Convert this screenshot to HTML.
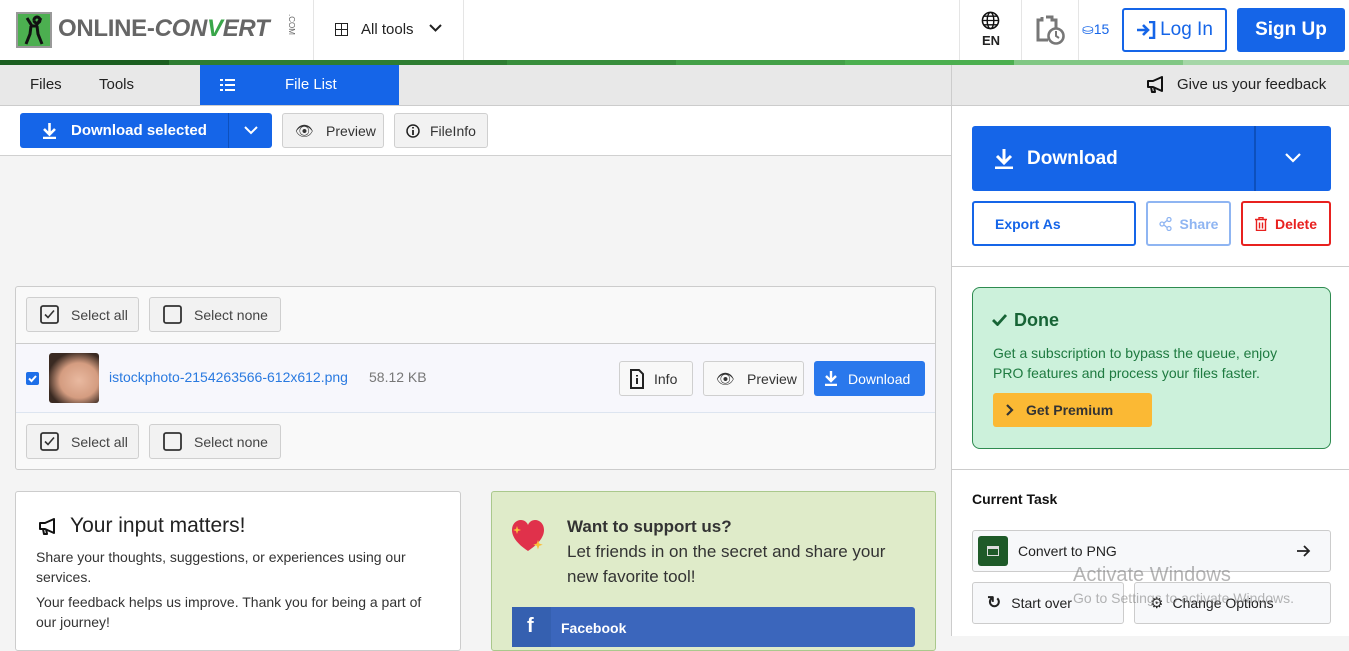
<!DOCTYPE html>
<html><head><meta charset="utf-8"><style>
*{box-sizing:border-box;margin:0;padding:0}
body{width:1349px;height:636px;overflow:hidden;font-family:"Liberation Sans",sans-serif;background:#f4f4f4;position:relative;color:#222}
.a{position:absolute}
.btn{position:absolute;display:flex;align-items:center;border-radius:3px;font-size:14px}
.gb{background:#f2f2f2;border:1px solid #cfcfcf;color:#333}
svg{display:block}
</style></head><body>
<div class="a" style="left:0;top:0;width:1349px;height:60px;background:#fff"></div>
<div class="a" style="left:16px;top:12px;width:36px;height:36px;background:#4caf50;border:2px solid #999"><svg width="32" height="32" viewBox="0 0 32 32"><path d="M16 6a3 3 0 1 1 0 .1M9 4l5 8h4l5-8M13 12l-1 8-4 10M19 12l1 8 4 10" stroke="#111" stroke-width="3" fill="none"/></svg></div>
<div class="a" style="left:58px;top:15px;font-size:24px;font-weight:bold;color:#666;letter-spacing:-0.3px">ONLINE-<span style="font-style:italic">CON</span><span style="font-style:italic;color:#3aa64a">V</span><span style="font-style:italic">ERT</span></div>
<div class="a" style="left:281px;top:20px;font-size:8px;color:#666;transform:rotate(90deg)">.COM</div>
<div class="a" style="left:313px;top:0;width:1px;height:60px;background:#e5e5e5"></div>
<div class="a" style="left:463px;top:0;width:1px;height:60px;background:#e5e5e5"></div>
<div class="a" style="left:335px;top:23px"><svg width="13" height="13"><rect x="0.5" y="0.5" width="12" height="12" fill="none" stroke="#222"/><path d="M6.5 0v13M0 6.5h13" stroke="#222"/></svg></div>
<div class="a" style="left:361px;top:21px;font-size:15px">All tools</div>
<div class="a" style="left:429px;top:24px"><svg width="13" height="9"><path d="M1 1l5.5 5.5L12 1" stroke="#222" stroke-width="2" fill="none"/></svg></div>
<div class="a" style="left:959px;top:0;width:1px;height:60px;background:#e5e5e5"></div>
<div class="a" style="left:1021px;top:0;width:1px;height:60px;background:#e5e5e5"></div>
<div class="a" style="left:1078px;top:0;width:1px;height:60px;background:#e5e5e5"></div>
<div class="a" style="left:981px;top:11px"><svg width="19" height="19" viewBox="0 0 20 20"><circle cx="10" cy="10" r="8.5" fill="none" stroke="#111" stroke-width="1.6"/><ellipse cx="10" cy="10" rx="3.5" ry="8.5" fill="none" stroke="#111" stroke-width="1.5"/><path d="M1.5 10h17M3 5.5h14M3 14.5h14" stroke="#111" stroke-width="1.4"/></svg></div>
<div class="a" style="left:982px;top:33px;font-size:13px;font-weight:bold">EN</div>
<div class="a" style="left:1035px;top:14px"><svg width="30" height="32" viewBox="0 0 30 32"><path d="M11 3h6v3h4v8M13 26H3V6h4V3" stroke="#777" stroke-width="3" fill="none"/><circle cx="21" cy="22" r="7.5" fill="#fff" stroke="#777" stroke-width="2.6"/><path d="M21 17v5l3 2" stroke="#777" stroke-width="2" fill="none"/></svg></div>
<div class="a" style="left:1082px;top:21px;font-size:14px;color:#1565e8">⛀15</div>
<div class="btn" style="left:1122px;top:8px;width:105px;height:44px;border:2px solid #1565e8;color:#1565e8;font-size:19px;justify-content:center;background:#fff">
<svg width="20" height="18" viewBox="0 0 20 18" style="margin-right:4px"><path d="M1 9h10M7 4l5 5-5 5M13 1h5v16h-5" stroke="#1565e8" stroke-width="2.6" fill="none"/></svg>Log In</div>
<div class="btn" style="left:1237px;top:8px;width:108px;height:44px;background:#1565e8;color:#fff;font-size:19px;font-weight:bold;justify-content:center">Sign Up</div>
<div class="a" style="left:0;top:60px;width:1349px;height:5px;display:flex">
<div style="width:169px;background:#1b5e20"></div><div style="width:169px;background:#2e7d32"></div><div style="width:169px;background:#2e7d32"></div><div style="width:169px;background:#388e3c"></div><div style="width:169px;background:#43a047"></div><div style="width:169px;background:#4caf50"></div><div style="width:169px;background:#81c784"></div><div style="flex:1;background:#a5d6a7"></div></div>
<div class="a" style="left:0;top:65px;width:1349px;height:41px;background:#e8e8e8;border-bottom:1px solid #ccc"></div>
<div class="a" style="left:30px;top:76px;font-size:15px">Files</div>
<div class="a" style="left:99px;top:76px;font-size:15px">Tools</div>
<div class="a" style="left:200px;top:65px;width:199px;height:40px;background:#1565e8;color:#fff;font-size:15px"><span class="a" style="left:85px;top:11px">File List</span>
<svg class="a" style="left:20px;top:14px" width="15" height="12"><path d="M0 1h3M5 1h10M0 6h3M5 6h10M0 11h3M5 11h10" stroke="#fff" stroke-width="2"/></svg></div>
<div class="a" style="left:1146px;top:76px"><svg width="20" height="17" viewBox="0 0 20 17"><path d="M2 5h5l9-4v14l-9-4H2z M5 11l1 5h3l-1-5" stroke="#111" stroke-width="2" fill="none" stroke-linejoin="round"/></svg></div>
<div class="a" style="left:1177px;top:76px;font-size:15px">Give us your feedback</div>
<div class="a" style="left:0;top:106px;width:951px;height:50px;background:#fff;border-bottom:1px solid #d0d0d0"></div>
<div class="btn" style="left:20px;top:113px;width:252px;height:35px;background:#1565e8;color:#fff;font-weight:bold;font-size:15px">
<svg style="margin:0 14px 0 22px" width="15" height="16"><path d="M7.5 0v10M2 6l5.5 5.5L13 6M1 15h13" stroke="#fff" stroke-width="2.6" fill="none"/></svg>Download selected
<div class="a" style="left:208px;top:0;width:1px;height:35px;background:#0d50bd"></div>
<svg class="a" style="left:224px;top:13px" width="14" height="9"><path d="M1 1l6 6 6-6" stroke="#fff" stroke-width="2" fill="none"/></svg></div>
<div class="btn gb" style="left:282px;top:113px;width:102px;height:35px"><span style="margin:0 12px 0 12px;font-size:15px">👁︎</span>Preview</div>
<div class="btn gb" style="left:394px;top:113px;width:94px;height:35px"><svg style="margin:0 10px 0 11px" width="14" height="14"><circle cx="7" cy="7" r="6" fill="none" stroke="#222" stroke-width="1.5"/><path d="M7 6v5M7 3v1.5" stroke="#222" stroke-width="1.8"/></svg>FileInfo</div>
<div class="a" style="left:951px;top:65px;width:1px;height:571px;background:#ccc"></div>
<div class="a" style="left:952px;top:106px;width:397px;height:530px;background:#fff"></div>
<div class="a" style="left:15px;top:286px;width:921px;height:184px;background:#f9f9f9;border:1px solid #ccc;border-radius:3px"></div>
<div class="a" style="left:16px;top:343px;width:919px;height:70px;background:#f7f7fc;border-top:1px solid #ccc;border-bottom:1px solid #dde5f0"></div>
<div class="btn gb" style="left:26px;top:297px;width:113px;height:35px;color:#444"><svg style="margin:0 12px 0 13px" width="19" height="19"><rect x="1" y="1" width="17" height="17" rx="2" fill="none" stroke="#333" stroke-width="1.8"/><path d="M5 9.5l3 3 6-7" stroke="#333" stroke-width="1.6" fill="none"/></svg>Select all</div>
<div class="btn gb" style="left:149px;top:297px;width:132px;height:35px;color:#444"><svg style="margin:0 12px 0 13px" width="19" height="19"><rect x="1" y="1" width="17" height="17" rx="2" fill="none" stroke="#333" stroke-width="1.8"/></svg>Select none</div>
<div class="btn gb" style="left:26px;top:424px;width:113px;height:35px;color:#444"><svg style="margin:0 12px 0 13px" width="19" height="19"><rect x="1" y="1" width="17" height="17" rx="2" fill="none" stroke="#333" stroke-width="1.8"/><path d="M5 9.5l3 3 6-7" stroke="#333" stroke-width="1.6" fill="none"/></svg>Select all</div>
<div class="btn gb" style="left:149px;top:424px;width:132px;height:35px;color:#444"><svg style="margin:0 12px 0 13px" width="19" height="19"><rect x="1" y="1" width="17" height="17" rx="2" fill="none" stroke="#333" stroke-width="1.8"/></svg>Select none</div>
<div class="a" style="left:26px;top:372px;width:13px;height:13px;background:#1e6fe8;border-radius:2px"><svg width="13" height="13"><path d="M3 6.5l2.5 2.5 4.5-5" stroke="#fff" stroke-width="2" fill="none"/></svg></div>
<div class="a" style="left:49px;top:353px;width:50px;height:50px;border-radius:3px;background:radial-gradient(ellipse at 60% 55%,#e9b9a0 0,#d49c80 45%,#3a2a22 75%)"></div>
<div class="a" style="left:109px;top:369px;font-size:14px;color:#2a7ae0">istockphoto-2154263566-612x612.png</div>
<div class="a" style="left:369px;top:369px;font-size:14px;color:#777">58.12 KB</div>
<div class="btn gb" style="left:619px;top:361px;width:74px;height:35px;background:#f8f8f8"><svg style="margin:0 10px 0 10px" width="14" height="20"><path d="M1 1h8l4 4v14H1z" fill="none" stroke="#222" stroke-width="2"/><path d="M7 9v6M7 6v1.5" stroke="#222" stroke-width="2"/></svg>Info</div>
<div class="btn gb" style="left:703px;top:361px;width:101px;height:35px;background:#f8f8f8"><span style="margin:0 12px;font-size:15px">👁︎</span>Preview</div>
<div class="btn" style="left:814px;top:361px;width:111px;height:35px;background:#2a78ec;color:#fff"><svg style="margin:0 10px 0 10px" width="14" height="15"><path d="M7 0v9M2 5l5 5 5-5M1 14h12" stroke="#fff" stroke-width="2.4" fill="none"/></svg>Download</div>
<div class="a" style="left:15px;top:491px;width:446px;height:160px;background:#fff;border:1px solid #ccc;border-radius:3px"></div>
<div class="a" style="left:38px;top:518px"><svg width="20" height="17" viewBox="0 0 20 17"><path d="M2 5h5l9-4v14l-9-4H2z M5 11l1 5h3l-1-5" stroke="#111" stroke-width="2" fill="none" stroke-linejoin="round"/></svg></div>
<div class="a" style="left:70px;top:514px;font-size:21px;color:#222">Your input matters!</div>
<div class="a" style="left:36px;top:547px;width:392px;font-size:14px;line-height:20px;color:#333">Share your thoughts, suggestions, or experiences using our services.<div style="margin-top:5px">Your feedback helps us improve. Thank you for being a part of our journey!</div></div>
<div class="a" style="left:491px;top:491px;width:445px;height:160px;background:#dfebc9;border:1px solid #aac88c;border-radius:3px"></div>
<div class="a" style="left:511px;top:519px"><svg width="38" height="34" viewBox="0 0 38 34"><path d="M17 32C5 24 1 17 1 11 1 5 5 1 10 1c3 0 6 2 7 5 1-3 4-5 7-5 5 0 9 4 9 10 0 6-4 13-16 21z" fill="#e0314b"/><path d="M6 7l1 3 3 1-3 1-1 3-1-3-3-1 3-1zM27 21l1.2 3.5 3.5 1.2-3.5 1.2L27 30.5l-1.2-3.6-3.5-1.2 3.5-1.2z" fill="#fbbf3a"/></svg></div>
<div class="a" style="left:567px;top:514px;width:350px;font-size:17px;line-height:25px;color:#333"><b>Want to support us?</b><br>Let friends in on the secret and share your new favorite tool!</div>
<div class="a" style="left:512px;top:607px;width:403px;height:40px;background:#3b66bc;border-radius:3px;color:#fff;font-weight:bold;font-size:14px"><div class="a" style="left:0;top:0;width:39px;height:40px;background:#3560b0"></div><span class="a" style="left:15px;top:8px;font-size:20px;font-weight:bold">f</span><span class="a" style="left:49px;top:13px">Facebook</span></div>
<div class="btn" style="left:972px;top:126px;width:359px;height:65px;background:#1565e8;color:#fff;font-size:19px;font-weight:bold">
<svg style="margin:0 13px 0 22px" width="20" height="20"><path d="M10 0v12M3 7l7 7 7-7M1 19h18" stroke="#fff" stroke-width="3" fill="none"/></svg>Download
<div class="a" style="left:282px;top:0;width:2px;height:65px;background:#0d50bd"></div>
<svg class="a" style="left:313px;top:27px" width="16" height="10"><path d="M1 1l7 7 7-7" stroke="#fff" stroke-width="2.2" fill="none"/></svg></div>
<div class="btn" style="left:972px;top:201px;width:164px;height:45px;border:2px solid #1565e8;color:#1565e8;font-weight:bold;padding-left:21px">Export As</div>
<div class="btn" style="left:1146px;top:201px;width:85px;height:45px;border:2px solid #8fb5f2;color:#8fb5f2;font-weight:bold;justify-content:center"><svg style="margin-right:8px" width="13" height="14"><circle cx="3" cy="7" r="2" fill="none" stroke="#8fb5f2" stroke-width="1.3"/><circle cx="10" cy="2.5" r="2" fill="none" stroke="#8fb5f2" stroke-width="1.3"/><circle cx="10" cy="11.5" r="2" fill="none" stroke="#8fb5f2" stroke-width="1.3"/><path d="M5 6l3-2.5M5 8l3 2.5" stroke="#8fb5f2" stroke-width="1.3"/></svg>Share</div>
<div class="btn" style="left:1241px;top:201px;width:90px;height:45px;border:2px solid #e8211f;color:#e8211f;font-weight:bold;justify-content:center"><svg style="margin-right:8px" width="12" height="14"><path d="M0 2.5h12M4 2V0.5h4V2M1.5 3v10.5h9V3M4.5 5.5v6M7.5 5.5v6" stroke="#e8211f" stroke-width="1.4" fill="none"/></svg>Delete</div>
<div class="a" style="left:952px;top:266px;width:397px;height:1px;background:#ccc"></div>
<div class="a" style="left:972px;top:287px;width:359px;height:162px;background:#ccf1db;border:1px solid #2e8b50;border-radius:8px"></div>
<div class="a" style="left:992px;top:314px"><svg width="15" height="12"><path d="M1 6l4.5 4.5L14 1" stroke="#176436" stroke-width="2.8" fill="none"/></svg></div>
<div class="a" style="left:1014px;top:310px;font-size:18px;font-weight:bold;color:#176436">Done</div>
<div class="a" style="left:993px;top:343px;width:305px;font-size:14px;line-height:20px;color:#1e7a40">Get a subscription to bypass the queue, enjoy PRO features and process your files faster.</div>
<div class="btn" style="left:993px;top:393px;width:159px;height:34px;background:#fbb934;color:#333;font-weight:bold"><svg style="margin:0 12px 0 13px" width="8" height="12"><path d="M1 1l5 5-5 5" stroke="#333" stroke-width="2.2" fill="none"/></svg>Get Premium</div>
<div class="a" style="left:952px;top:469px;width:397px;height:1px;background:#ccc"></div>
<div class="a" style="left:972px;top:491px;font-size:14px;font-weight:bold;color:#111">Current Task</div>
<div class="btn" style="left:972px;top:530px;width:359px;height:42px;background:#f7f8fa;border:1px solid #ccc;color:#222">
<div style="width:30px;height:30px;background:#1e5a28;border-radius:3px;margin:0 10px 0 5px;display:flex;align-items:center;justify-content:center"><div style="width:12px;height:10px;border:1.5px solid #ddd;border-top-width:3px"></div></div>Convert to PNG
<svg class="a" style="left:324px;top:14px" width="14" height="12"><path d="M0 6h12M7 1l5 5-5 5" stroke="#222" stroke-width="1.8" fill="none"/></svg></div>
<div class="btn" style="left:972px;top:582px;width:152px;height:42px;background:#f7f8fa;border:1px solid #ccc;color:#222"><span style="margin:0 10px 0 14px;font-size:17px;font-weight:bold">↻</span>Start over</div>
<div class="btn" style="left:1134px;top:582px;width:197px;height:42px;background:#f7f8fa;border:1px solid #ccc;color:#222"><span style="margin:0 9px 0 15px;font-size:15px">⚙</span>Change Options</div>
<div class="a" style="left:1073px;top:564px;font-size:20px;color:rgba(120,120,120,0.55)">Activate Windows</div>
<div class="a" style="left:1073px;top:590px;font-size:14px;color:rgba(120,120,120,0.55)">Go to Settings to activate Windows.</div>
</body></html>
